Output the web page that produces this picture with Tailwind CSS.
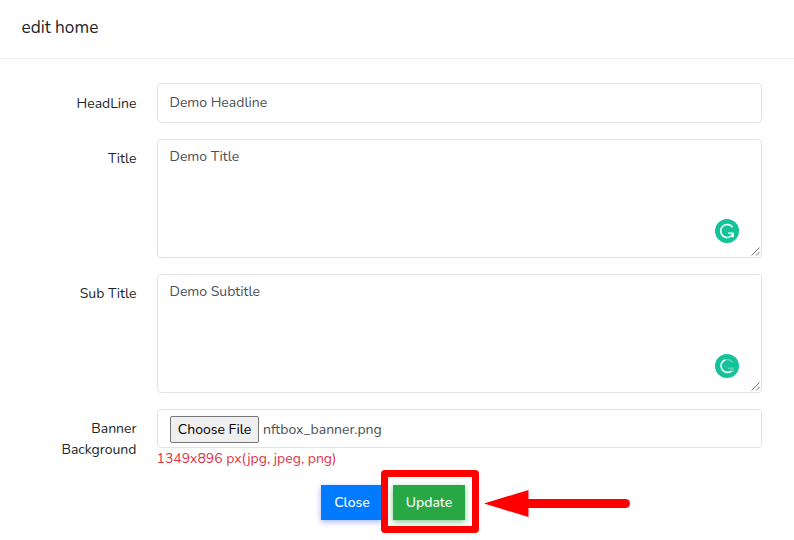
<!DOCTYPE html>
<html lang="en">
<head>
<meta charset="utf-8">
<title>edit home</title>
<script src="https://cdn.jsdelivr.net/npm/@tailwindcss/browser@4"></script>
</head>
<body class="relative h-[540px] w-[794px] overflow-hidden bg-white font-['Nunito','Open_Sans',sans-serif] text-[14px] leading-[21px] text-[#212529]">
<header class="h-[59px] border-b border-[#eff0f2] pt-4 pl-[21.5px]">
  <h1 class="text-[17.2px] leading-6"><span>edit home</span></h1>
</header>
<main class="flex flex-col gap-4 pt-6 pr-8">
  <div class="flex h-10 gap-[20.5px]">
    <label class="w-[136.5px] pt-[10px] text-right"><span>HeadLine</span></label>
    <div class="flex-1 rounded-[4px] border border-[#e2e3e5] px-[11.5px] pt-2 text-[#495057]"><span>Demo Headline</span></div>
  </div>
  <div class="flex h-[119px] gap-[20.5px]">
    <label class="w-[136.5px] pt-[9px] text-right"><span>Title</span></label>
    <div class="relative flex-1 rounded-[4px] border border-[#e2e3e5] px-[11.5px] pt-[6px] text-[#495057]"><span>Demo Title</span>
      <svg class="absolute right-[22px] bottom-[14px] size-6" viewBox="0 0 24 24" fill="none"><circle cx="12" cy="12" r="12" fill="#15c39a"/><path d="M17.5 8.3A6.5 6.5 0 1 0 15.5 17.600M13 14.200h5" stroke="#fff" stroke-width="1.600"/><path d="M14.600 17.200L18.800 13.400V18.600z" fill="#fff"/></svg>
      <svg class="absolute right-px bottom-px size-[9px]" viewBox="0 0 9 9" stroke="#555" stroke-width="0.8"><path d="M.5 8.5l8-8M5 8.5l3.5-3.5"/></svg>
    </div>
  </div>
  <div class="flex h-[119px] gap-[20.5px]">
    <label class="w-[136.5px] pt-[9px] text-right"><span>Sub Title</span></label>
    <div class="relative flex-1 rounded-[4px] border border-[#e2e3e5] px-[11.5px] pt-[6px] text-[#495057]"><span>Demo Subtitle</span>
      <svg class="absolute right-[22px] bottom-[14px] size-6" viewBox="0 0 24 24" fill="none"><circle cx="12" cy="12" r="12" fill="#15c39a"/><path d="M10.500 5.700A6.5 6.5 0 1 0 16.500 17" stroke="#fff" stroke-width="1.600"/><path d="M10.500 5.700A6.5 6.5 0 0 1 17.500 8.300M13 14.200h5v4" stroke="#5bd5b8" stroke-width="1.5"/></svg>
      <svg class="absolute right-px bottom-px size-[9px]" viewBox="0 0 9 9" stroke="#555" stroke-width="0.8"><path d="M.5 8.5l8-8M5 8.5l3.5-3.5"/></svg>
    </div>
  </div>
  <div class="flex h-[60px] gap-[20.5px]">
    <label class="w-[136.5px] pt-[9px] text-right"><span>Banner</span><br><span>Background</span></label>
    <div class="flex-1">
      <div class="flex h-[39px] items-start gap-1 rounded-[4px] border border-[#e2e3e5] pt-[6px] pl-3 text-[#495057]">
        <button class="h-[27px] w-[89px] rounded-[2px] border border-[#767676] bg-[#efefef] text-black"><span>Choose File</span></button>
        <span class="pt-[3px]"><span>nftbox_banner.png</span></span>
      </div>
      <p class="-ml-[0.5px] text-[#dc3545]"><span>1349x896 px(jpg, jpeg, png)</span></p>
    </div>
  </div>
  <div class="flex h-[35px] gap-[10px] pl-[321px] font-medium text-white">
    <button class="w-[62px] bg-[#007bff] shadow-[0_2px_6px_#acb5f6]"><span>Close</span></button>
    <button class="w-[72px] bg-[#28a745] shadow-[0_2px_6px_#81c98f]"><span>Update</span></button>
  </div>
</main>
<div class="absolute top-[470px] left-[381px] h-[63px] w-[98px] rounded-[4px] border-[7px] border-[#ff0000]"></div>
<svg class="absolute top-[488px] left-[483px] h-[32px] w-[150px]" viewBox="0 0 150 32" fill="#f00"><path d="M1 15.5L45.5 2V29z"/><path d="M44 11h98.5a4.5 4.5 0 0 1 0 9H44z"/></svg>
</body>
</html>
